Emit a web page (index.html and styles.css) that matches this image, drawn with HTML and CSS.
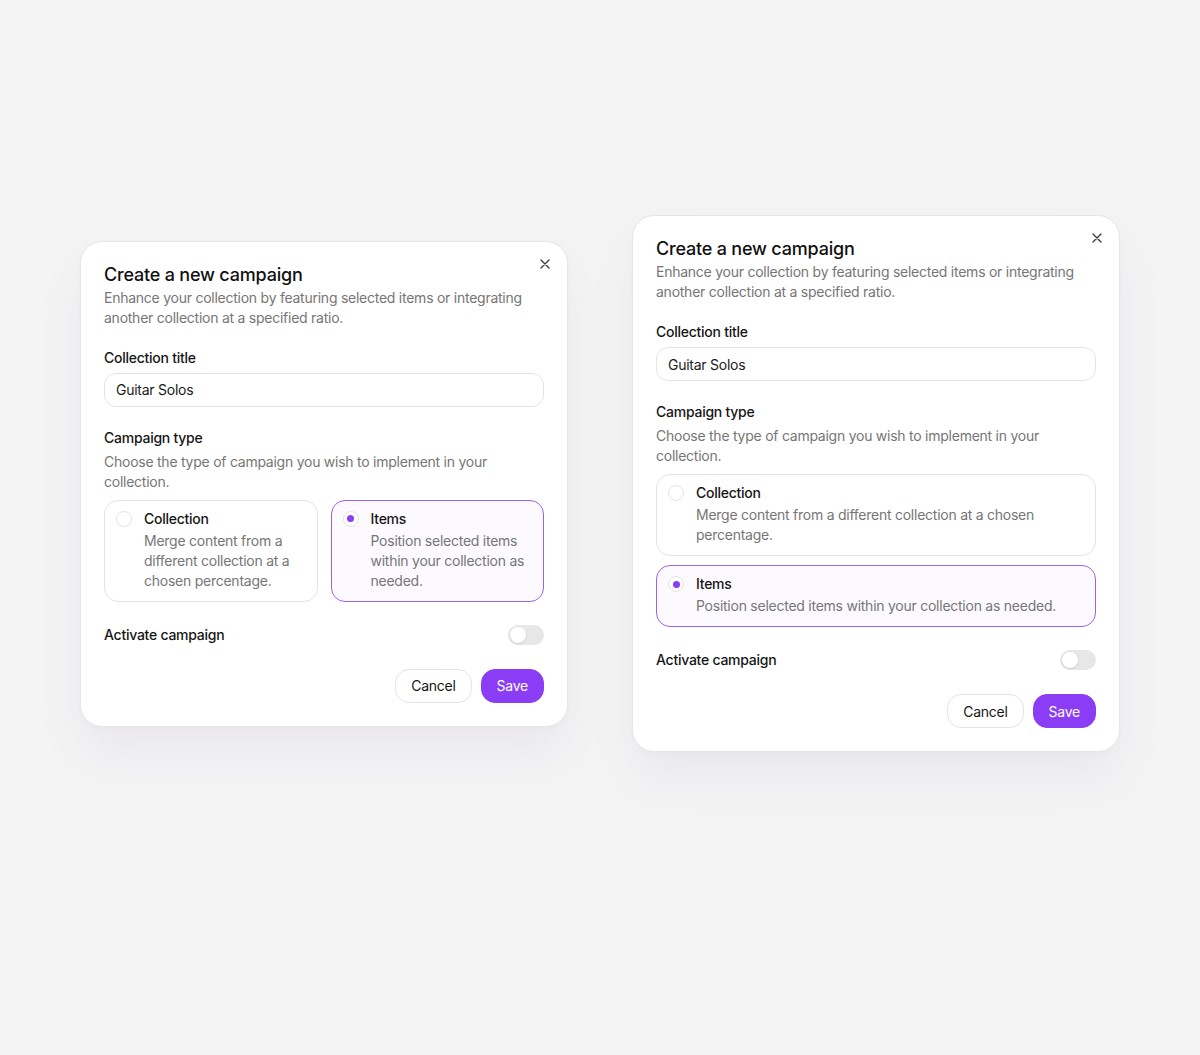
FILE: index.html
```html
<!DOCTYPE html>
<html lang="en">
<head>
<title>Create a new campaign</title>
<meta charset="UTF-8">
<link rel="stylesheet" href="styles.css">
</head>
<body>
  <div class="stage">

    <!-- =[ Dialog: options side by side ]=================================== -->
    <form class="dialog">
      <button class="close" type="button" aria-label="Close">
        <svg width="10" height="10" viewBox="0 0 10 10"><path d="M1 1L9 9M9 1L1 9" stroke="#3a3a3a" stroke-width="1.3" stroke-linecap="round"/></svg>
      </button>
      <h2 class="title">Create a new campaign</h2>
      <p class="hint">Enhance your collection by featuring selected items or integrating another collection at a specified ratio.</p>

      <label class="label">Collection title</label>
      <div class="input">Guitar Solos</div>

      <div class="label gap">Campaign type</div>
      <p class="hint sub">Choose the type of campaign you wish to implement in your collection.</p>

      <div class="options cols">
        <div class="option">
          <span class="radio"></span>
          <div>
            <div class="option-name">Collection</div>
            <div class="option-text">Merge content from a different collection at a chosen percentage.</div>
          </div>
        </div>
        <div class="option selected">
          <span class="radio"></span>
          <div>
            <div class="option-name">Items</div>
            <div class="option-text">Position selected items within your collection as needed.</div>
          </div>
        </div>
      </div>

      <div class="switch-row">
        <span class="label">Activate campaign</span>
        <span class="switch"><span class="knob"></span></span>
      </div>

      <div class="actions">
        <button class="btn" type="button">Cancel</button>
        <button class="btn primary" type="button">Save</button>
      </div>
    </form>

    <!-- =[ Dialog: options stacked ]======================================== -->
    <form class="dialog">
      <button class="close" type="button" aria-label="Close">
        <svg width="10" height="10" viewBox="0 0 10 10"><path d="M1 1L9 9M9 1L1 9" stroke="#3a3a3a" stroke-width="1.3" stroke-linecap="round"/></svg>
      </button>
      <h2 class="title">Create a new campaign</h2>
      <p class="hint">Enhance your collection by featuring selected items or integrating another collection at a specified ratio.</p>

      <label class="label">Collection title</label>
      <div class="input">Guitar Solos</div>

      <div class="label gap">Campaign type</div>
      <p class="hint sub">Choose the type of campaign you wish to implement in your collection.</p>

      <div class="options rows">
        <div class="option">
          <span class="radio"></span>
          <div>
            <div class="option-name">Collection</div>
            <div class="option-text">Merge content from a different collection at a chosen percentage.</div>
          </div>
        </div>
        <div class="option selected">
          <span class="radio"></span>
          <div>
            <div class="option-name">Items</div>
            <div class="option-text">Position selected items within your collection as needed.</div>
          </div>
        </div>
      </div>

      <div class="switch-row">
        <span class="label">Activate campaign</span>
        <span class="switch"><span class="knob"></span></span>
      </div>

      <div class="actions">
        <button class="btn" type="button">Cancel</button>
        <button class="btn primary" type="button">Save</button>
      </div>
    </form>

  </div>
</body>
</html>
```
FILE: styles.css
```css
body {
    margin: 0;
    background-color: #F4F4F4;
    color: #141414;
    font-family: Inter, "Liberation Sans", sans-serif;
    font-size: 14px;
    letter-spacing: -0.25px;
}
.stage {
    min-height: 1055px;
    box-sizing: border-box;
    padding-bottom: 88px;
    display: flex;
    align-items: center;
    justify-content: center;
    gap: 64px;
}
.dialog {
    position: relative;
    width: 488px;
    box-sizing: border-box;
    padding: 21px 23px 23px;
    background-color: #FFFFFF;
    border: 1px solid #E6E6E6;
    border-radius: 22px;
    box-shadow: 0 28px 48px rgba(110, 90, 170, 0.07), 0 2px 6px rgba(0, 0, 0, 0.02);
    display: flex;
    flex-direction: column;
}
.close {
    position: absolute;
    top: 12px;
    right: 12px;
    width: 20px;
    height: 20px;
    padding: 0;
    border: none;
    background: none;
    display: flex;
    align-items: center;
    justify-content: center;
}
.title {
    margin: 0;
    font-size: 18px;
    line-height: 24px;
    font-weight: 500;
    letter-spacing: -0.2px;
    color: #111111;
}
.hint {
    margin: 1px 0 0;
    line-height: 20px;
    color: #767676;
}
.hint.sub {
    margin-top: 4px;
}
.label {
    margin-top: 20px;
    line-height: 20px;
    font-weight: 500;
    color: #161616;
}
.label.gap {
    margin-top: 21px;
}
.input {
    margin-top: 5px;
    height: 34px;
    box-sizing: border-box;
    padding: 0 11px;
    display: flex;
    align-items: center;
    border: 1px solid #E4E4E4;
    border-radius: 12px;
    color: #1A1A1A;
}
.options {
    margin-top: 8px;
    display: grid;
    gap: 13px;
}
.options.cols {
    grid-template-columns: 1fr 1fr;
}
.options.rows {
    gap: 9px;
}
.option {
    display: flex;
    gap: 12px;
    padding: 8px 12px 10px 11px;
    border: 1px solid #E4E4E4;
    border-radius: 14px;
}
.option.selected {
    border-color: #9B62EE;
    background-color: #FCFAFF;
}
.radio {
    flex: none;
    margin-top: 2px;
    width: 14px;
    height: 14px;
    border: 1px solid #E4E4E4;
    border-radius: 50%;
    background-color: #FFFFFF;
    display: flex;
    align-items: center;
    justify-content: center;
}
.selected .radio::after {
    content: "";
    width: 7px;
    height: 7px;
    border-radius: 50%;
    background-color: #8A3CF6;
}
.option-name {
    line-height: 20px;
    font-weight: 500;
    color: #161616;
}
.option-text {
    margin-top: 2px;
    line-height: 20px;
    color: #767676;
}
.switch-row {
    margin-top: 23px;
    display: flex;
    align-items: center;
    justify-content: space-between;
}
.switch-row .label {
    margin-top: 0;
}
.switch {
    width: 36px;
    height: 20px;
    box-sizing: border-box;
    padding: 2px;
    border-radius: 10px;
    background-color: #E7E7E7;
    display: flex;
}
.knob {
    width: 16px;
    height: 16px;
    border-radius: 50%;
    background-color: #FFFFFF;
    box-shadow: 0 1px 2px rgba(0, 0, 0, 0.12);
}
.actions {
    margin-top: 24px;
    display: flex;
    justify-content: flex-end;
    gap: 9px;
}
.btn {
    height: 34px;
    padding: 0 15px;
    font-family: inherit;
    font-size: 14px;
    letter-spacing: -0.25px;
    color: #161616;
    background-color: #FFFFFF;
    border: 1px solid #E4E4E4;
    border-radius: 14px;
}
.btn.primary {
    color: #FFFFFF;
    background-color: #8B3DF6;
    border-color: #8B3DF6;
}
```
